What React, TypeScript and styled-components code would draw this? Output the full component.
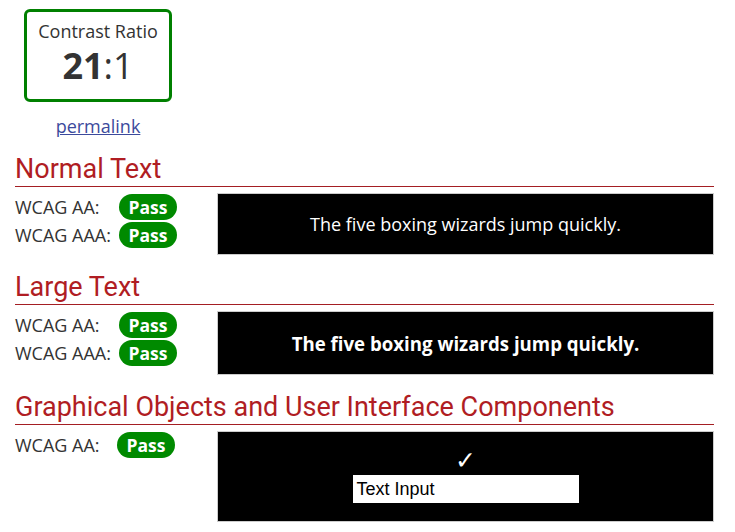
import React from "react";
import styled, { createGlobalStyle } from "styled-components";

const Global = createGlobalStyle`
  html, body { margin: 0; padding: 0; background: #fff; }
  body { font-family: "Open Sans", "Liberation Sans", sans-serif; color: #333; }
`;

const Page = styled.div`
  padding: 9px 21px 0 15px;
  display: flex;
  flex-direction: column;
`;

const Ratio = styled.div`
  margin-left: 9px;
  width: 148px;
  display: flex;
  flex-direction: column;
  align-items: center;
`;

const RatioBox = styled.div`
  box-sizing: border-box;
  width: 148px;
  height: 93px;
  border: 3px solid #008000;
  border-radius: 6px;
  display: flex;
  flex-direction: column;
  align-items: center;
  padding-top: 7px;
`;

const RatioLabel = styled.div`
  font-size: 18px;
  line-height: 24px;
  color: #333;
`;

const RatioValue = styled.div`
  font-size: 36px;
  line-height: 46px;
  color: #333;
  b { font-weight: 700; }
`;

const Permalink = styled.a`
  margin-top: 12px;
  font-size: 18px;
  line-height: 24px;
  color: #3c4a9c;
  text-decoration: underline;
`;

const Section = styled.section<{ $top: number }>`
  display: flex;
  flex-direction: column;
  margin-top: ${(p) => p.$top}px;
`;

const Heading = styled.h2`
  margin: 0;
  font-family: Roboto, "Liberation Sans", sans-serif;
  font-weight: 400;
  font-size: 27px;
  line-height: 32px;
  color: #b01d23;
  border-bottom: 1px solid #a41e23;
  padding-bottom: 1px;
`;

const Body = styled.div`
  display: flex;
  margin-top: 6px;
`;

const Results = styled.div`
  width: 202px;
  display: flex;
  flex-direction: column;
  gap: 2px;
  padding-top: 1px;
`;

const ResultRow = styled.div`
  display: flex;
  align-items: center;
  height: 26px;
`;

const Label = styled.span`
  width: 104px;
  font-size: 18px;
  color: #333;
`;

const Badge = styled.span<{ $shift?: number }>`
  box-sizing: border-box;
  width: 58px;
  height: 26px;
  border-radius: 13px;
  background: #008a00;
  color: #fff;
  font-weight: 700;
  font-size: 17.5px;
  display: flex;
  align-items: center;
  justify-content: center;
  margin-left: ${(p) => p.$shift ?? 0}px;
`;

const Sample = styled.div<{ $h: number; $bold?: boolean }>`
  flex: 1;
  box-sizing: border-box;
  height: ${(p) => p.$h}px;
  background: #000;
  border: 1px solid #ccc;
  color: #fff;
  display: flex;
  align-items: center;
  justify-content: center;
  font-size: ${(p) => (p.$bold ? "18.66px" : "18px")};
  font-weight: ${(p) => (p.$bold ? 700 : 400)};
`;

const Widgets = styled.div`
  flex: 1;
  box-sizing: border-box;
  height: 91px;
  background: #000;
  border: 1px solid #ccc;
  display: flex;
  flex-direction: column;
  align-items: center;
  padding-top: 15px;
`;

const Check = styled.div`
  color: #fff;
  font-family: "DejaVu Sans", sans-serif;
  font-size: 25px;
  line-height: 28px;
`;

const TextInput = styled.div`
  box-sizing: border-box;
  width: 226px;
  height: 28px;
  background: #fff;
  color: #000;
  font-family: "Liberation Sans", Arial, sans-serif;
  font-size: 18px;
  display: flex;
  align-items: center;
  padding-left: 4px;
`;

const sentence = "The five boxing wizards jump quickly.";

export default function App() {
  return (
    <>
      <Global />
      <Page>
        <Ratio>
          <RatioBox>
            <RatioLabel>Contrast Ratio</RatioLabel>
            <RatioValue>
              <b>21</b>:1
            </RatioValue>
          </RatioBox>
          <Permalink href="#">permalink</Permalink>
        </Ratio>

        <Section $top={15}>
          <Heading>Normal Text</Heading>
          <Body>
            <Results>
              <ResultRow>
                <Label>WCAG AA:</Label>
                <Badge>Pass</Badge>
              </ResultRow>
              <ResultRow>
                <Label>WCAG AAA:</Label>
                <Badge>Pass</Badge>
              </ResultRow>
            </Results>
            <Sample $h={62}>{sentence}</Sample>
          </Body>
        </Section>

        <Section $top={16}>
          <Heading>Large Text</Heading>
          <Body>
            <Results>
              <ResultRow>
                <Label>WCAG AA:</Label>
                <Badge>Pass</Badge>
              </ResultRow>
              <ResultRow>
                <Label>WCAG AAA:</Label>
                <Badge>Pass</Badge>
              </ResultRow>
            </Results>
            <Sample $h={64} $bold>
              {sentence}
            </Sample>
          </Body>
        </Section>

        <Section $top={16}>
          <Heading>Graphical Objects and User Interface Components</Heading>
          <Body>
            <Results>
              <ResultRow>
                <Label>WCAG AA:</Label>
                <Badge $shift={-2}>Pass</Badge>
              </ResultRow>
            </Results>
            <Widgets>
              <Check>✓</Check>
              <TextInput>Text Input</TextInput>
            </Widgets>
          </Body>
        </Section>
      </Page>
    </>
  );
}
